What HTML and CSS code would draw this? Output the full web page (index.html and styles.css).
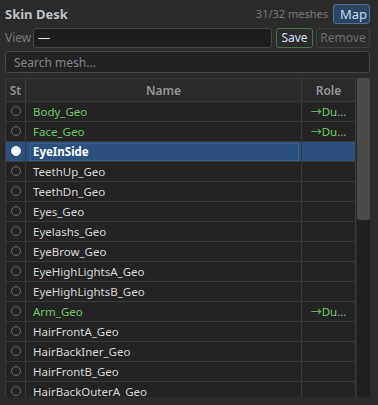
FILE: index.html
```html
<!DOCTYPE html>
<html lang="en">
<head>
    <meta charset="UTF-8">
    <title>Skin Desk</title>
    <link rel="stylesheet" href="styles.css">
</head>
<body>
    <div class="panel">
        <div class="top-bar">
            <h1 class="title">Skin Desk</h1>
            <span class="mesh-count">31/32 meshes</span>
            <button class="btn btn-map">Map</button>
        </div>

        <div class="view-bar">
            <label class="view-label" for="viewName">View</label>
            <input class="view-input" id="viewName" type="text" value="—">
            <button class="btn btn-save">Save</button>
            <button class="btn btn-remove" disabled>Remove</button>
        </div>

        <input class="search-input" type="text" placeholder="Search mesh...">

        <div class="mesh-list">
            <div class="table-wrap">
                <table class="mesh-table">
                    <thead>
                        <tr>
                            <th class="col-st">St</th>
                            <th class="col-name">Name</th>
                            <th class="col-role">Role</th>
                        </tr>
                    </thead>
                    <tbody>
                        <tr class="linked"><td><span class="dot"></span></td><td>Body_Geo</td><td class="role"><span class="arrow">→</span>Du...</td></tr>
                        <tr class="linked"><td><span class="dot"></span></td><td>Face_Geo</td><td class="role"><span class="arrow">→</span>Du...</td></tr>
                        <tr class="selected"><td><span class="dot"></span></td><td><span class="focus">EyeInSide</span></td><td></td></tr>
                        <tr><td><span class="dot"></span></td><td>TeethUp_Geo</td><td></td></tr>
                        <tr><td><span class="dot"></span></td><td>TeethDn_Geo</td><td></td></tr>
                        <tr><td><span class="dot"></span></td><td>Eyes_Geo</td><td></td></tr>
                        <tr><td><span class="dot"></span></td><td>Eyelashs_Geo</td><td></td></tr>
                        <tr><td><span class="dot"></span></td><td>EyeBrow_Geo</td><td></td></tr>
                        <tr><td><span class="dot"></span></td><td>EyeHighLightsA_Geo</td><td></td></tr>
                        <tr><td><span class="dot"></span></td><td>EyeHighLightsB_Geo</td><td></td></tr>
                        <tr class="linked"><td><span class="dot"></span></td><td>Arm_Geo</td><td class="role"><span class="arrow">→</span>Du...</td></tr>
                        <tr><td><span class="dot"></span></td><td>HairFrontA_Geo</td><td></td></tr>
                        <tr><td><span class="dot"></span></td><td>HairBackIner_Geo</td><td></td></tr>
                        <tr><td><span class="dot"></span></td><td>HairFrontB_Geo</td><td></td></tr>
                        <tr><td><span class="dot"></span></td><td>HairBackOuterA_Geo</td><td></td></tr>
                    </tbody>
                </table>
            </div>
            <div class="scrollbar">
                <div class="scroll-thumb"></div>
            </div>
        </div>
    </div>
</body>
</html>
```

FILE: styles.css
```css
* {
    margin: 0;
    padding: 0;
    box-sizing: border-box;
}

body {
    font-family: 'Noto Sans', 'Open Sans', sans-serif;
    font-size: 12px;
    background: #2b2b2b;
    color: #d6d6d6;
    height: 405px;
    overflow: hidden;
}

.panel {
    padding: 3px 8px 0 5px;
}

.top-bar {
    display: flex;
    align-items: center;
    height: 21px;
}

.title {
    font-size: 13px;
    font-weight: bold;
    color: #b9c1c9;
    flex: 1;
}

.mesh-count {
    font-size: 11px;
    color: #777;
    margin-right: 5px;
}

.btn {
    font-family: inherit;
    font-size: 12px;
    height: 20px;
    border-radius: 3px;
    padding: 0 6px;
    background: #2b2b2b;
    border: 1px solid #474747;
    color: #d0d0d0;
}

.btn-map {
    width: 37px;
    background: #2b4561;
    border-color: #4d7297;
    color: #c2dcf5;
    font-size: 13px;
}

.view-bar {
    display: flex;
    align-items: center;
    margin-top: 3px;
    height: 21px;
}

.view-label {
    color: #7c7c7c;
    font-size: 12px;
    width: 28px;
}

.view-input {
    flex: 1;
    height: 20px;
    background: #1e1e1e;
    border: 1px solid #464646;
    border-radius: 3px;
    color: #e8e8e8;
    font-family: inherit;
    font-size: 12px;
    padding: 0 4px;
    margin-right: 4px;
}

.btn-save {
    width: 37px;
    padding: 0;
    border-color: #3e7a3e;
    color: #cfe3f7;
    margin-right: 3px;
}

.btn-remove {
    width: 54px;
    padding: 0;
    border-color: #3f3f3f;
    color: #6e6e6e;
}

.search-input {
    display: block;
    width: 100%;
    height: 22px;
    margin-top: 3px;
    background: #222;
    border: 1px solid #464646;
    border-radius: 3px;
    color: #e0e0e0;
    font-family: inherit;
    font-size: 12px;
    padding: 0 8px;
}

.search-input::placeholder {
    color: #858585;
}

.mesh-list {
    display: flex;
    margin-top: 5px;
    height: 319px;
    overflow: hidden;
}

.table-wrap {
    width: 351px;
    overflow: hidden;
}

.mesh-table {
    width: 351px;
    border-collapse: collapse;
    table-layout: fixed;
    background: #232323;
}

.mesh-table th,
.mesh-table td {
    border: 1px solid #3a3a3a;
    height: 20px;
    white-space: nowrap;
    overflow: hidden;
}

.mesh-table th {
    height: 23px;
    background: #2a2a2a;
    color: #969696;
    font-weight: 600;
    font-size: 12px;
    text-align: center;
}

.col-st {
    width: 20px;
}

.col-role {
    width: 54px;
}

.mesh-table td {
    padding: 0 0 0 7px;
    font-size: 11.5px;
    line-height: 18px;
}

.mesh-table td:first-child {
    padding: 0;
    text-align: center;
}

.dot {
    display: inline-block;
    width: 10px;
    height: 10px;
    border: 1px solid #6a6a6a;
    border-radius: 50%;
    vertical-align: middle;
    margin-top: -2px;
}

.linked td {
    color: #6ccb5f;
}

.mesh-table td.role {
    padding: 0;
    text-align: center;
    color: #6ccb5f;
}

.arrow {
    font-family: 'Noto Sans CJK KR', 'DejaVu Sans', sans-serif;
    font-size: 11px;
}

.selected td {
    background: #2c5181;
    color: #fff;
    font-weight: bold;
}

.selected .dot {
    background: #fff;
    border-color: #fff;
}

.focus {
    display: block;
    margin-left: -3px;
    margin-right: 2px;
    padding-left: 2px;
    border: 1px solid #3c6190;
    line-height: 16px;
}

.scrollbar {
    width: 13px;
    margin-left: 1px;
    background: #1f1f1f;
}

.scroll-thumb {
    height: 142px;
    background: #4a4a4a;
    border-radius: 2px;
}
```
